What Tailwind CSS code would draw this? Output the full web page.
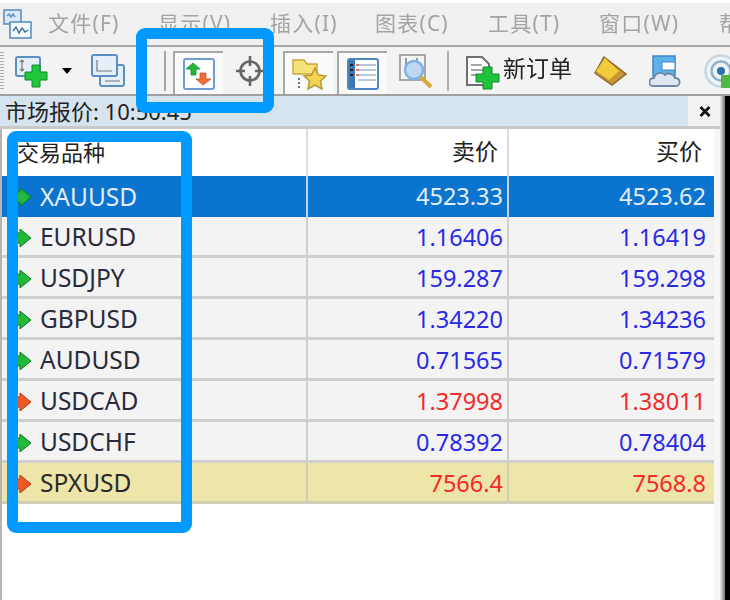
<!DOCTYPE html>
<html lang="zh-CN">
<head>
    <meta charset="UTF-8">
    <title>市场报价</title>
    <script src="https://cdn.jsdelivr.net/npm/@tailwindcss/browser@4"></script>
</head>
<body class="bg-white overflow-hidden">
<div class="relative w-[730px] h-[600px] overflow-hidden bg-white font-['Noto_Sans','Noto_Sans_CJK_SC',sans-serif]">
  <div class="blur-[0.6px] w-[730px] h-[600px] flex flex-col">

    <!-- Menu -->
    <div class="h-[42px] mt-[3px] shrink-0 bg-[#f0f0f0] flex items-center text-[21px] tracking-[1.2px] text-[#a3a3a3] whitespace-nowrap [&>*]:shrink-0">
      <svg class="ml-[3px] w-[29px] h-[31px]" viewBox="0 0 29 31" fill="none" stroke="#5b8fc4" stroke-width="1.6">
        <rect x="1" y="1" width="17" height="14" fill="#dbe8f5"/>
        <rect x="7" y="13" width="21" height="16" fill="#f6f9fc"/>
        <path d="M4 7l2-2 2 3 2-3 2 3" stroke-width="1.4"/>
        <path d="M10 22l3-4 3 6 3-5 3 4 3-2" stroke="#3f6f9f" stroke-width="1.4"/>
      </svg>
      <span class="ml-[16px] w-[110px]">文件(F)</span>
      <span class="w-[112px]">显示(V)</span>
      <span class="w-[105px]">插入(I)</span>
      <span class="w-[113px]">图表(C)</span>
      <span class="w-[111px]">工具(T)</span>
      <span class="w-[120px]">窗口(W)</span>
      <span>帮</span>
    </div>
    <div class="h-[2px] shrink-0 bg-[#a8a8a8]"></div>

    <!-- Toolbar -->
    <div class="h-[49px] shrink-0 bg-[#f3f3f3] flex items-center pt-[1px] border-b-[2px] border-[#a0a0a0] [&>*]:shrink-0">
      <div class="w-[4px] h-[38px] bg-[repeating-linear-gradient(#b0b0b0_0_1px,#f3f3f3_1px_3px)]"></div>
      <svg class="ml-[11px] w-[34px] h-[34px]" viewBox="0 0 34 34">
        <rect x="1" y="3" width="24" height="19" rx="2" fill="#e6eff8" stroke="#5b8fc4" stroke-width="2"/>
        <path d="M7 6v11M5 8l2-2 2 2M5 15l2 2 2-2" fill="none" stroke="#777" stroke-width="1.2"/>
        <path d="M17 11h8v7h7v8h-7v7h-8v-7h-7v-8h7z" fill="#22c63c" stroke="#128a28"/>
      </svg>
      <div class="ml-[13px] w-0 h-0 border-x-[5px] border-x-transparent border-t-[6px] border-t-black"></div>
      <svg class="ml-[19px] w-[34px] h-[34px]" viewBox="0 0 34 34" fill="#e6eff8" stroke="#5b8fc4" stroke-width="2">
        <rect x="9" y="11" width="24" height="21" rx="2"/>
        <rect x="1" y="1" width="25" height="21" rx="2"/>
        <path d="M6 6v11h15M14 27h15" fill="none" stroke="#777" stroke-width="1.2"/>
      </svg>
      <div class="ml-[39px] w-[2px] h-[40px] bg-[#a8a8a8]"></div>
      <div class="ml-[7px] w-[50px] h-[43px] mt-[3px] flex items-center justify-center bg-[#fafafa] border-l-[2px] border-t-[2px] border-[#a8a8a8]">
        <svg class="w-[32px] h-[32px]" viewBox="0 0 32 32">
          <rect x="1" y="1" width="30" height="30" rx="2" fill="#fff" stroke="#6d9dd0" stroke-width="2"/>
          <path d="M10 5l7 6h-4v6H8v-6H3z" fill="#1fb83a" stroke="#128a28" stroke-width=".8"/>
          <path d="M20 27l-7-6h4v-6h6v6h5z" fill="#ee6f3a" stroke="#c4552a" stroke-width=".8"/>
        </svg>
      </div>
      <svg class="ml-[13px] w-[28px] h-[30px]" viewBox="0 0 28 30" fill="none" stroke="#666" stroke-width="2.6">
        <circle cx="14" cy="15" r="9.500"/>
        <path d="M14 0v10M14 20v10M0 15h9M19 15h9"/>
      </svg>
      <div class="ml-[19px] w-[50px] h-[43px] mt-[3px] flex items-center justify-center bg-[#fafafa] border-l-[2px] border-t-[2px] border-[#a8a8a8]">
        <svg class="w-[36px] h-[36px]" viewBox="0 0 36 36">
          <path d="M2 8V4h11l3 4h10v10H2z" fill="#f6e27a" stroke="#c7a93c" stroke-width="1.4"/>
          <path d="M24 12l3.500 7 7.500 1-5.500 5 1.500 8-7-4-7 4 1.500-8-5.500-5 7.500-1z" fill="#f2d452" stroke="#b49a34" stroke-width="1.500"/>
          <path d="M8 22v12" stroke="#777" stroke-width="2" stroke-dasharray="2 2"/>
        </svg>
      </div>
      <div class="ml-[4px] w-[50px] h-[43px] mt-[3px] flex items-center justify-center bg-[#fafafa] border-l-[2px] border-t-[2px] border-[#a8a8a8]">
        <svg class="w-[32px] h-[32px]" viewBox="0 0 32 32">
          <rect x="1" y="1" width="30" height="30" rx="2" fill="#fff" stroke="#4d86c0" stroke-width="2"/>
          <rect x="2" y="2" width="6" height="28" fill="#3e78b2"/>
          <path d="M11 7h18M11 12h18M11 17h18M11 22h18" stroke="#9db8d8" stroke-width="1.500"/>
          <path d="M3 7h3M3 12h3M3 17h3" stroke="#222" stroke-width="2"/>
          <path d="M9 7h3M9 12h3M9 17h3" stroke="#e05050" stroke-width="1.500"/>
        </svg>
      </div>
      <svg class="ml-[12px] w-[36px] h-[36px]" viewBox="0 0 36 36">
        <rect x="1" y="2" width="25" height="25" fill="#f3f3f3" stroke="#a6a6a6" stroke-width="2"/>
        <path d="M7 5v10M18 5v10" stroke="#6f7f90" stroke-width="1.500"/>
        <circle cx="15" cy="17" r="9" fill="#bcd9f2" stroke="#7fb0de" stroke-width="2.500"/>
        <path d="M22 24l10 10" stroke="#d9a93a" stroke-width="4"/>
      </svg>
      <div class="ml-[12px] w-[2px] h-[40px] bg-[#b0b0b0]"></div>
      <svg class="ml-[17px] w-[34px] h-[40px]" viewBox="0 0 34 40">
        <path d="M1 6h15l7 7v21H1z" fill="#fff" stroke="#6f6f6f" stroke-width="2"/>
        <path d="M5 14h11M5 19h14M5 24h6" stroke="#8a8a8a" stroke-width="1.500"/>
        <path d="M17 16h9v7h7v8h-7v7h-9v-7h-7v-8h7z" fill="#1fc43b" stroke="#128a28"/>
      </svg>
      <span class="ml-[3px] mb-[6px] text-[23px] text-[#222] leading-none whitespace-nowrap">新订单</span>
      <svg class="ml-[22px] w-[33px] h-[30px]" viewBox="0 0 33 30">
        <path d="M10 1L32 18 18 29 1 17z" fill="#c9963a" stroke="#8f6a2a" stroke-width="1.500"/>
        <path d="M11 2l14 13-10 9L2 15z" fill="#f2cc3a"/>
      </svg>
      <svg class="ml-[22px] w-[33px] h-[32px]" viewBox="0 0 33 32">
        <path d="M4 1h22v20H4z" fill="#5fb1ea" stroke="#3f86c4" stroke-width="1.500"/>
        <path d="M13 7h13v8H13z" fill="#fff" stroke="#3f86c4"/>
        <path d="M4 31c-5 0-5-8 1-8 1-5 8-7 11-3 3-3 9-1 10 3 6 0 6 8 1 8z" fill="#dfe6ef" stroke="#6f87a8" stroke-width="1.800"/>
      </svg>
      <svg class="ml-[20px] w-[34px] h-[36px]" viewBox="0 0 34 36" fill="none">
        <circle cx="19" cy="18" r="15.500" stroke="#c3d6e6" stroke-width="2.500"/>
        <circle cx="19" cy="18" r="9.500" stroke="#8db3d4" stroke-width="2.500"/>
        <circle cx="19" cy="18" r="4" fill="#2b70b0"/>
        <path d="M19 22h14v13H19z" fill="#4fb846"/>
      </svg>
    </div>

    <!-- Panel title -->
    <div class="flex shrink-0 h-[30px]">
      <div class="w-[688px] bg-[#d6e4f0] pl-[5px] flex items-center text-[22px] text-[#222] whitespace-nowrap">市场报价: 10:50:45</div>
      <div class="w-[34px] bg-[#f3f3f3] flex items-center justify-center pr-[1px]">
        <svg class="w-[12px] h-[11px]" viewBox="0 0 12 11"><path d="M1.500 1l9 9M10.500 1l-9 9" stroke="#111" stroke-width="2.800"/></svg>
      </div>
    </div>
    <div class="h-[3px] shrink-0 w-[722px] bg-[#c8c8c8]"></div>

    <!-- Market watch table -->
    <div class="w-[722px] flex-1 flex bg-[#f6f6f6]">
      <div class="w-[714px] bg-white border-l-[2px] border-[#b5b5b5] text-[23.5px] leading-none">
        <div class="grid grid-cols-[306px_201px_205px] h-[47px] [&>*]:pb-[2px] text-[#222] text-[23px]">
          <div class="pl-[15px] flex items-center border-r-2 border-[#dcdcdc] text-[22px]">交易品种</div>
          <div class="pr-[9px] flex items-center justify-end border-r-2 border-[#dcdcdc]">卖价</div>
          <div class="pr-[12px] flex items-center justify-end">买价</div>
        </div>

        <div class="grid grid-cols-[306px_201px_205px] h-[41px] [&>*]:pt-[1px] bg-[#0a74cf] text-[#e4edf6]">
          <div class="flex items-center border-r-2 border-[#bcd3e8] text-[24.5px]"><svg class="ml-[15px] w-[15px] h-[18px]" viewBox="0 0 15 18"><path d="M3 0l11 9-11 9v-4H0V4h3z" fill="#22b83a" stroke="#0d7a20"/></svg><span class="ml-[8px]">XAUUSD</span></div>
          <div class="pr-[4px] flex items-center justify-end border-r-2 border-[#bcd3e8]">4523.33</div>
          <div class="pr-[8px] flex items-center justify-end">4523.62</div>
        </div>
        <div class="grid grid-cols-[306px_201px_205px] h-[41px] [&>*]:pt-[3px] bg-[#f3f3f3] border-b-[3px] border-[#cfcfcf]">
          <div class="flex items-center border-r-2 border-[#cfcfcf] text-[#2a2a3a] text-[24.5px]"><svg class="ml-[15px] w-[15px] h-[18px]" viewBox="0 0 15 18"><path d="M3 0l11 9-11 9v-4H0V4h3z" fill="#22b83a" stroke="#0d7a20"/></svg><span class="ml-[8px]">EURUSD</span></div>
          <div class="pr-[4px] flex items-center justify-end border-r-2 border-[#cfcfcf] text-[#2a2ae6]">1.16406</div>
          <div class="pr-[8px] flex items-center justify-end text-[#2a2ae6]">1.16419</div>
        </div>
        <div class="grid grid-cols-[306px_201px_205px] h-[41px] [&>*]:pt-[3px] bg-[#f3f3f3] border-b-[3px] border-[#cfcfcf]">
          <div class="flex items-center border-r-2 border-[#cfcfcf] text-[#2a2a3a] text-[24.5px]"><svg class="ml-[15px] w-[15px] h-[18px]" viewBox="0 0 15 18"><path d="M3 0l11 9-11 9v-4H0V4h3z" fill="#22b83a" stroke="#0d7a20"/></svg><span class="ml-[8px]">USDJPY</span></div>
          <div class="pr-[4px] flex items-center justify-end border-r-2 border-[#cfcfcf] text-[#2a2ae6]">159.287</div>
          <div class="pr-[8px] flex items-center justify-end text-[#2a2ae6]">159.298</div>
        </div>
        <div class="grid grid-cols-[306px_201px_205px] h-[41px] [&>*]:pt-[3px] bg-[#f3f3f3] border-b-[3px] border-[#cfcfcf]">
          <div class="flex items-center border-r-2 border-[#cfcfcf] text-[#2a2a3a] text-[24.5px]"><svg class="ml-[15px] w-[15px] h-[18px]" viewBox="0 0 15 18"><path d="M3 0l11 9-11 9v-4H0V4h3z" fill="#22b83a" stroke="#0d7a20"/></svg><span class="ml-[8px]">GBPUSD</span></div>
          <div class="pr-[4px] flex items-center justify-end border-r-2 border-[#cfcfcf] text-[#2a2ae6]">1.34220</div>
          <div class="pr-[8px] flex items-center justify-end text-[#2a2ae6]">1.34236</div>
        </div>
        <div class="grid grid-cols-[306px_201px_205px] h-[41px] [&>*]:pt-[3px] bg-[#f3f3f3] border-b-[3px] border-[#cfcfcf]">
          <div class="flex items-center border-r-2 border-[#cfcfcf] text-[#2a2a3a] text-[24.5px]"><svg class="ml-[15px] w-[15px] h-[18px]" viewBox="0 0 15 18"><path d="M3 0l11 9-11 9v-4H0V4h3z" fill="#22b83a" stroke="#0d7a20"/></svg><span class="ml-[8px]">AUDUSD</span></div>
          <div class="pr-[4px] flex items-center justify-end border-r-2 border-[#cfcfcf] text-[#2a2ae6]">0.71565</div>
          <div class="pr-[8px] flex items-center justify-end text-[#2a2ae6]">0.71579</div>
        </div>
        <div class="grid grid-cols-[306px_201px_205px] h-[41px] [&>*]:pt-[3px] bg-[#f3f3f3] border-b-[3px] border-[#cfcfcf]">
          <div class="flex items-center border-r-2 border-[#cfcfcf] text-[#2a2a3a] text-[24.5px]"><svg class="ml-[15px] w-[15px] h-[18px]" viewBox="0 0 15 18"><path d="M3 0l11 9-11 9v-4H0V4h3z" fill="#ee5a24" stroke="#a83a10"/></svg><span class="ml-[8px]">USDCAD</span></div>
          <div class="pr-[4px] flex items-center justify-end border-r-2 border-[#cfcfcf] text-[#f52a2a]">1.37998</div>
          <div class="pr-[8px] flex items-center justify-end text-[#f52a2a]">1.38011</div>
        </div>
        <div class="grid grid-cols-[306px_201px_205px] h-[41px] [&>*]:pt-[3px] bg-[#f3f3f3] border-b-[3px] border-[#cfcfcf]">
          <div class="flex items-center border-r-2 border-[#cfcfcf] text-[#2a2a3a] text-[24.5px]"><svg class="ml-[15px] w-[15px] h-[18px]" viewBox="0 0 15 18"><path d="M3 0l11 9-11 9v-4H0V4h3z" fill="#22b83a" stroke="#0d7a20"/></svg><span class="ml-[8px]">USDCHF</span></div>
          <div class="pr-[4px] flex items-center justify-end border-r-2 border-[#cfcfcf] text-[#2a2ae6]">0.78392</div>
          <div class="pr-[8px] flex items-center justify-end text-[#2a2ae6]">0.78404</div>
        </div>
        <div class="grid grid-cols-[306px_201px_205px] h-[41px] [&>*]:pt-[3px] bg-[#eee6a8] border-b-[3px] border-[#d0ceb4]">
          <div class="flex items-center border-r-2 border-[#d0ceb4] text-[#2a2a2a] text-[24.5px]"><svg class="ml-[15px] w-[15px] h-[18px]" viewBox="0 0 15 18"><path d="M3 0l11 9-11 9v-4H0V4h3z" fill="#ee5a24" stroke="#a83a10"/></svg><span class="ml-[8px]">SPXUSD</span></div>
          <div class="pr-[4px] flex items-center justify-end border-r-2 border-[#d0ceb4] text-[#f52a2a]">7566.4</div>
          <div class="pr-[8px] flex items-center justify-end text-[#f52a2a]">7568.8</div>
        </div>
      </div>
    </div>
  </div>

  <!-- Window edge -->
  <div class="absolute top-[96px] bottom-0 left-[720px] w-[5px] bg-gradient-to-r from-[#f0f0f0] to-[#777]"></div>
  <div class="absolute top-[96px] bottom-0 left-[725px] right-0 bg-black"></div>

  <!-- Highlight boxes drawn over the screenshot -->
  <div class="absolute left-[136px] top-[28px] w-[138px] h-[85px] border-[11px] border-[#0099ff] rounded-[9px]"></div>
  <div class="absolute left-[7px] top-[131px] w-[185px] h-[402px] border-[11px] border-[#0099ff] rounded-[9px]"></div>
</div>
</body>
</html>
